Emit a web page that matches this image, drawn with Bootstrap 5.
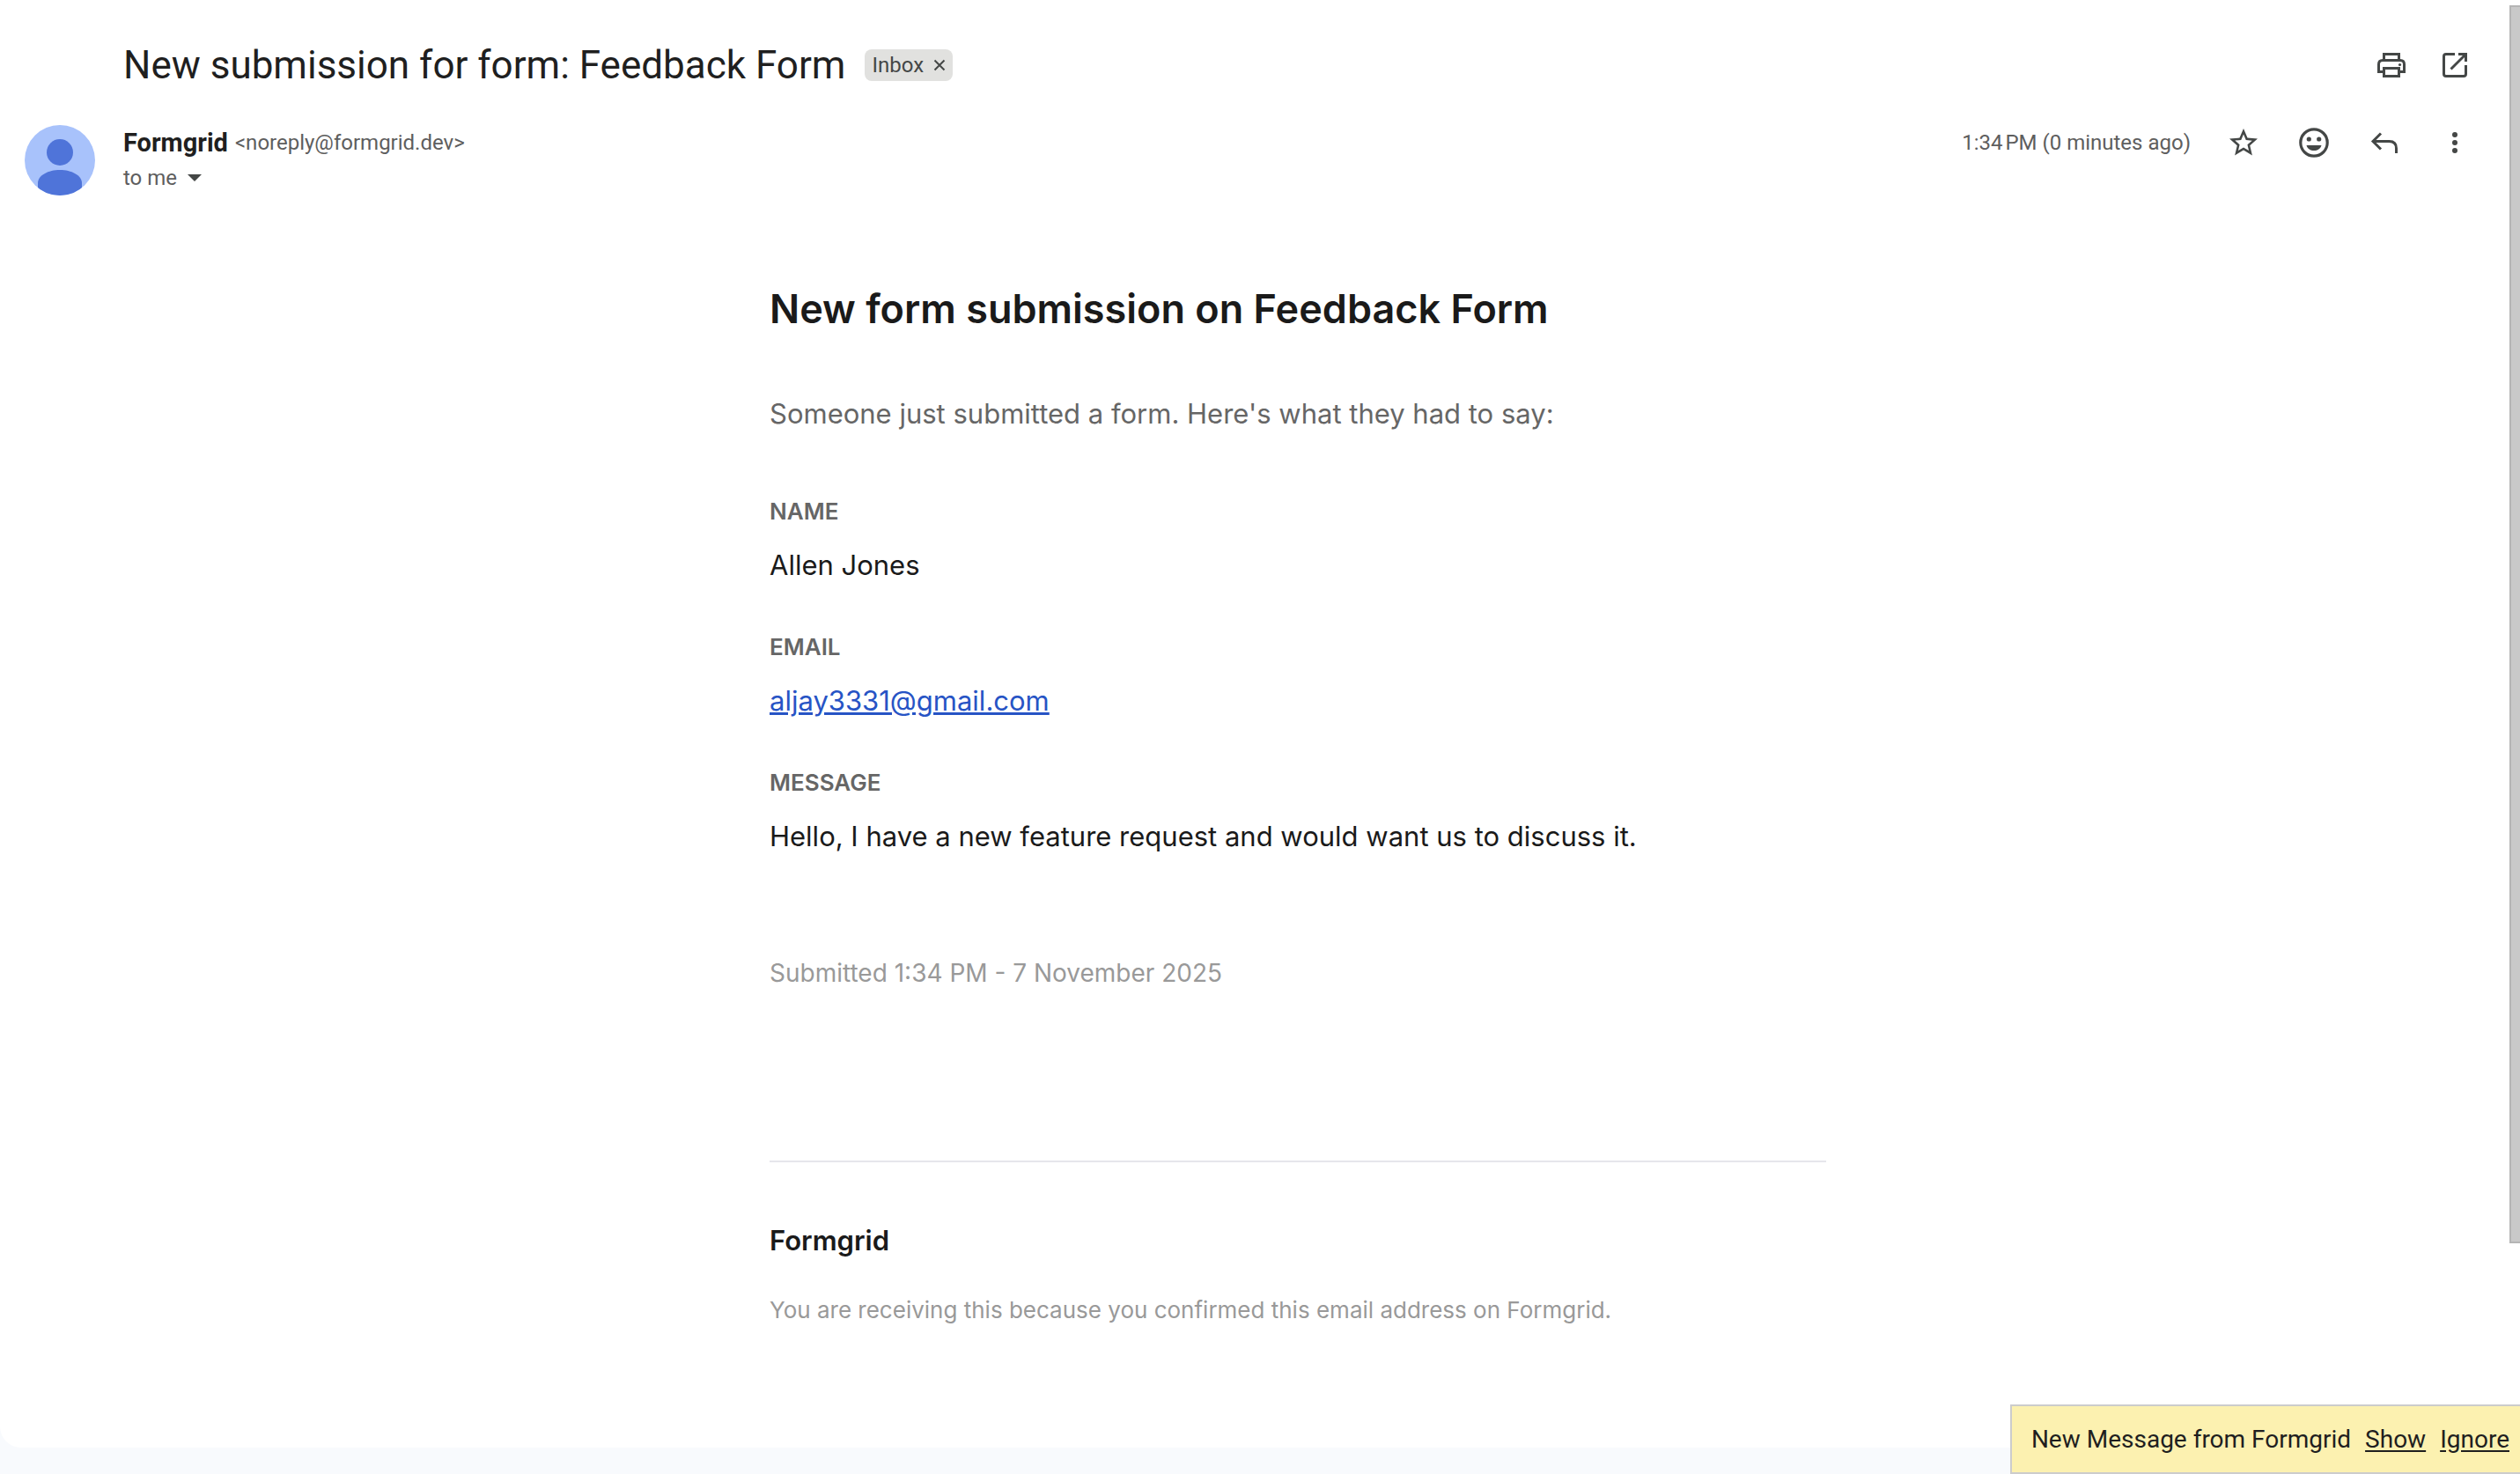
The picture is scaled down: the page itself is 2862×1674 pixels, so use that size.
<!DOCTYPE html>
<html lang="en">
<head>
<meta charset="utf-8">
<meta name="viewport" content="width=device-width, initial-scale=1">
<title>New submission for form: Feedback Form</title>
<link rel="stylesheet" href="https://cdn.jsdelivr.net/npm/bootstrap@5.3.0/dist/css/bootstrap.min.css">
<style>
  body { background: #f8fafd; font-family: Roboto, "Liberation Sans", sans-serif; color: #1f1f1f; font-size: 24px; line-height: 40px; }
  .app-shell { min-height: 100vh; padding-bottom: 30px; }
  .mail-pane { background: #fff; border-radius: 0 0 24px 24px; padding: 44px 54px 0 28px; }
  .gutter-col { width: 112px; }
  .subject-title { font-size: 44px; line-height: 60px; font-weight: 400; }
  .label-chip { background: #e1e1df; color: #444746; border-radius: 8px; height: 36px; padding: 0 8px; line-height: 36px; gap: 11px; margin-left: 22px; }
  .icon-btn { border: 0; background: none; padding: 0; color: #444746; width: 40px; height: 40px; display: flex; align-items: center; justify-content: center; }
  .icon-btn svg { width: 40px; height: 40px; }
  .chip-x { width: 14px; height: 36px; }
  .chip-x svg { width: 14px; height: 14px; }
  .caret-btn { width: 20px; margin-left: 10px; }
  .caret-btn svg { width: 16px; height: 8px; }
  .top-tools { gap: 32px; }
  .sender-row { margin-top: 38px; }
  .avatar-pic { width: 80px; height: 80px; }
  .sender-name { font-size: 29px; font-weight: 700; }
  .soft-text { color: #5e5e5e; }
  .meta-tools { gap: 40px; }
  .mail-letter { max-width: 1200px; margin: 99px auto 0; font-family: Inter, "Liberation Sans", sans-serif; font-size: 31px; line-height: 50px; color: #1a1a1a; padding-bottom: 120px; }
  .letter-title { font-size: 45px; line-height: 60px; font-weight: 600; margin-bottom: 64px; }
  .letter-intro { color: #666; margin-bottom: 66px; }
  .field-name { font-size: 26px; line-height: 40px; font-weight: 600; color: #666; text-transform: uppercase; margin-bottom: 16px; }
  .field-value { margin-bottom: 48px; }
  .field-value a { color: #2754c5; }
  .sent-note { font-size: 28px; line-height: 42px; color: #999; margin-top: 109px; }
  .letter-rule { border: 0; border-top: 2px solid #e6e6eb; opacity: 1; margin: 192px 0 64px; }
  .brand-line { font-weight: 600; margin-bottom: 34px; }
  .reason-line { font-size: 26px; line-height: 40px; color: #999; }
  .scroll-thumb { right: 0; top: 6px; width: 12px; height: 84vh; background: #c9c9c9; border: 2px solid #b5b5b5; border-right: 0; }
  .notice-bar { background: #fcf1b0; border: 2px solid #ccc; border-right: 0; font-size: 28px; height: 79px; padding: 0 12px 0 22px; gap: 16px; }
  .notice-bar button { border: 0; background: none; padding: 0; color: inherit; text-decoration: underline; text-underline-offset: 3px; }
</style>
<script src="https://cdn.jsdelivr.net/npm/bootstrap@5.3.0/dist/js/bootstrap.bundle.min.js"></script>
</head>
<body>
<div class="app-shell d-flex flex-column">
  <main class="mail-pane flex-grow-1">
    <header class="d-flex align-items-center">
      <div class="gutter-col flex-shrink-0"></div>
      <h1 class="subject-title mb-0">New submission for form: Feedback Form</h1>
      <span class="label-chip d-flex align-items-center">Inbox
        <button class="icon-btn chip-x" type="button" aria-label="Remove label Inbox"><svg viewBox="0 0 14 14" fill="none" stroke="currentColor" stroke-width="2"><path d="M1.500 1.500l11 11M12.500 1.500l-11 11"/></svg></button>
      </span>
      <div class="top-tools d-flex ms-auto">
        <button class="icon-btn" type="button" aria-label="Print all"><svg viewBox="0 0 40 40" fill="none" stroke="currentColor" stroke-width="3"><path d="M11.500 14V7.500h17V14"/><path d="M11 27.500H5.500V19q0-4.500 4.500-4.500h20q4.500 0 4.500 4.500v8.500H29"/><path d="M11.500 23.500h17v9h-17z"/><circle cx="29.500" cy="19.500" r="1.600" fill="currentColor" stroke="none"/></svg></button>
        <button class="icon-btn" type="button" aria-label="In new window"><svg viewBox="0 0 40 40" fill="none" stroke="currentColor" stroke-width="3"><path d="M20 7.500H10q-2.500 0-2.500 2.500v20q0 2.500 2.500 2.500h20q2.500 0 2.500-2.500V20"/><path d="M24 7.500h8.500V16M32 8L15.500 24.500"/></svg></button>
      </div>
    </header>
    <section class="sender-row d-flex align-items-start">
      <div class="gutter-col flex-shrink-0">
        <svg class="avatar-pic d-block" viewBox="0 0 80 80" role="img" aria-label="Formgrid"><defs><clipPath id="disc"><circle cx="40" cy="40" r="40"/></clipPath></defs><g clip-path="url(#disc)"><path fill="#a8c2fb" d="M0 0h80v80H0z"/><circle cx="40" cy="31" r="15" fill="#4f74d9"/><path fill="#4f74d9" d="M15 80V66c0-9 12-15 25-15s25 6 25 15v14z"/></g></svg>
      </div>
      <div>
        <div class="d-flex gap-2"><span class="sender-name">Formgrid</span><span class="soft-text">&lt;noreply@formgrid.dev&gt;</span></div>
        <div class="d-flex soft-text">to me<button class="icon-btn caret-btn" type="button" aria-label="Show details"><svg viewBox="0 0 16 8" fill="#444746"><path d="M0 0h16L8 8z"/></svg></button></div>
      </div>
      <div class="meta-tools d-flex align-items-center ms-auto">
        <time class="soft-text">1:34&#8239;PM (0 minutes ago)</time>
        <button class="icon-btn" type="button" aria-label="Star"><svg viewBox="-.5 -.5 25 25" fill="currentColor"><path d="M22 9.240l-7.190-.62L12 2 9.190 8.630 2 9.240l5.460 4.730L5.820 21 12 17.270 18.180 21l-1.630-7.030L22 9.240zM12 15.400l-3.760 2.270 1-4.280-3.320-2.880 4.380-.38L12 6.100l1.710 4.040 4.380.38-3.320 2.880 1 4.280L12 15.400z"/></svg></button>
        <button class="icon-btn" type="button" aria-label="Add reaction"><svg viewBox="0 0 40 40" fill="currentColor"><circle cx="20" cy="20" r="15.200" fill="none" stroke="currentColor" stroke-width="3.200"/><circle cx="14.300" cy="16" r="2.600"/><circle cx="25.700" cy="16" r="2.600"/><path d="M11.500 23h17c-1.200 4-4.500 6-8.500 6s-7.300-2-8.500-6z"/></svg></button>
        <button class="icon-btn" type="button" aria-label="Reply"><svg viewBox="0 0 40 40" fill="none" stroke="currentColor" stroke-width="3"><path d="M16 9.500l-9 9 9 9M7 18.500h18.500q8 0 8 8V32"/></svg></button>
        <button class="icon-btn" type="button" aria-label="More"><svg viewBox="0 0 40 40" fill="currentColor"><circle cx="20" cy="11" r="3"/><circle cx="20" cy="20" r="3"/><circle cx="20" cy="29" r="3"/></svg></button>
      </div>
    </section>
    <div class="d-flex">
      <div class="gutter-col flex-shrink-0"></div>
      <article class="mail-letter flex-grow-1">
        <h2 class="letter-title">New form submission on Feedback Form</h2>
        <p class="letter-intro">Someone just submitted a form. Here's what they had to say:</p>
        <dl class="mb-0">
          <dt class="field-name">Name</dt>
          <dd class="field-value">Allen Jones</dd>
          <dt class="field-name">Email</dt>
          <dd class="field-value"><a href="mailto:aljay3331@gmail.com">aljay3331@gmail.com</a></dd>
          <dt class="field-name">Message</dt>
          <dd class="field-value mb-0">Hello, I have a new feature request and would want us to discuss it.</dd>
        </dl>
        <p class="sent-note mb-0">Submitted 1:34 PM - 7 November 2025</p>
        <hr class="letter-rule">
        <p class="brand-line">Formgrid</p>
        <p class="reason-line mb-0">You are receiving this because you confirmed this email address on Formgrid.</p>
      </article>
    </div>
  </main>
</div>
<div class="scroll-thumb position-fixed"></div>
<div class="notice-bar position-fixed bottom-0 end-0 d-flex align-items-center" role="status"><span>New Message from Formgrid</span><button type="button">Show</button><button type="button">Ignore</button></div>
</body>
</html>
